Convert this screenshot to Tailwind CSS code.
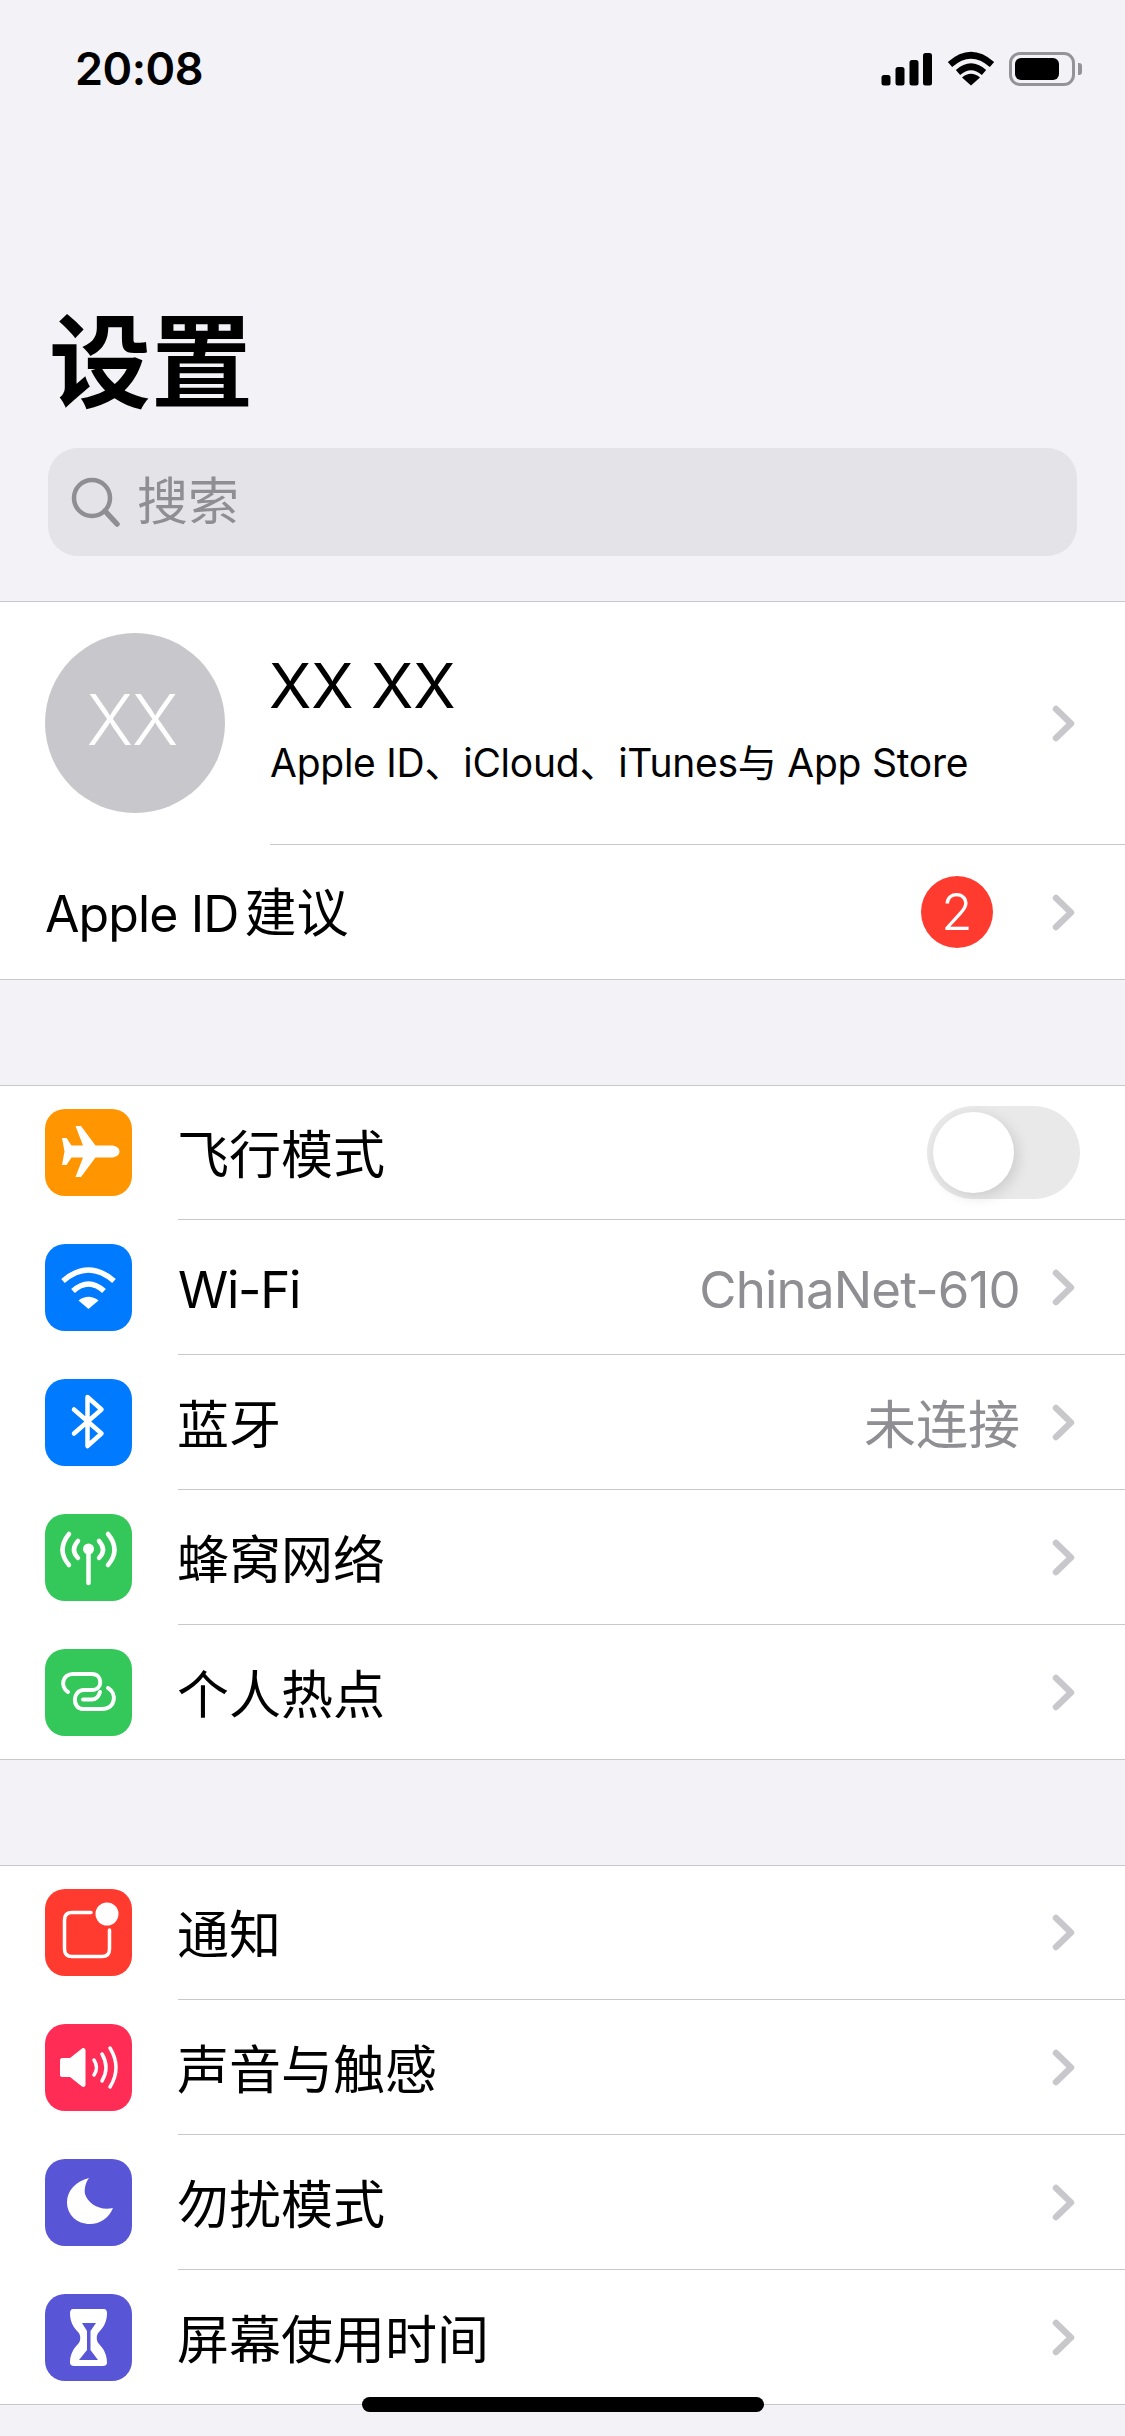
<!DOCTYPE html>
<html lang="zh">
<head>
<meta charset="utf-8">
<script src="https://cdn.jsdelivr.net/npm/@tailwindcss/browser@4"></script>
<title>设置</title>
</head>
<body class="m-0">
<div class="relative w-[1125px] h-[2436px] overflow-hidden bg-[#f2f2f7] text-black [font-family:Inter,'Noto_Sans_CJK_SC',sans-serif]">

  <!-- status bar -->
  <div class="h-[136px] flex items-start justify-between pl-[75px] pr-[43px] pt-[43px]">
    <div class="text-[45px] leading-[52px] font-semibold tracking-[-0.5px]">20:08</div>
    <div class="flex items-center gap-[14px] pt-[8px]">
      <svg class="w-[52px] h-[34px]" viewBox="0 0 52 34" fill="#000"><rect x="0.5" y="23" width="9" height="10.500" rx="2.500"/><rect x="14.500" y="15" width="9" height="18.500" rx="2.500"/><rect x="28.500" y="8" width="9" height="25.500" rx="2.500"/><rect x="42" y="1" width="9" height="32.500" rx="2.500"/></svg>
      <svg class="w-[48px] h-[36px]" viewBox="0 0 48 36" fill="none" stroke="#000" stroke-width="6.500"><path d="M3 13.500Q24 -5 45 13.500"/><path d="M11 21.500Q24 10 37 21.500"/><path d="M24 34.500L15 26.500Q24 19 33 26.500Z" fill="#000" stroke="none"/></svg>
      <div class="flex items-center gap-[3px]">
        <div class="w-[66px] h-[34px] rounded-[11px] border-[3px] border-[#939398] p-[3px]"><div class="w-[44px] h-full rounded-[6px] bg-black"></div></div>
        <div class="w-[4px] h-[12px] rounded-r-[3px] bg-[#939398]"></div>
      </div>
    </div>
  </div>

  <!-- large title -->
  <div class="h-[312px] pl-[49px] pt-[152px] text-[102px] leading-[150px] font-bold">设置</div>
  <div class="mx-[48px] h-[108px] rounded-[30px] bg-[#e3e3e8] flex items-center pl-[23px] gap-[16px] text-[#8e8e93] text-[51px]">
    <svg class="w-[50px] h-[50px]" viewBox="0 0 50 50" fill="none" stroke="#8e8e93" stroke-width="4.500" stroke-linecap="round"><circle cx="21" cy="21" r="18"/><path d="M34 34L46 47" stroke-width="5.500"/></svg>
    <span>搜索</span>
  </div>

  <!-- account section -->
  <section class="mt-[45px] bg-white border-y border-[#c8c7cc]">
    <div class="h-[243px] pl-[45px] flex items-center">
      <div class="w-[180px] h-[180px] mb-[2px] rounded-full bg-[#c7c7cc] flex items-center justify-center text-white text-[70px] font-light tracking-[-1px] pr-[6px] pb-[6px]">XX</div>
      <div class="flex-1 h-full ml-[45px] flex items-center border-b border-[#c8c7cc] pr-[49px]">
        <div class="flex-1 pb-[10px]">
          <div class="text-[62px] leading-[76px] ml-[-1px]">XX XX</div>
          <div class="text-[39px] leading-[52px] mt-[13px] tracking-[-0.25px]">Apple ID、iCloud、iTunes与 App Store</div>
        </div>
        <svg class="w-[25px] h-[41px]" viewBox="0 0 25 41" fill="none" stroke="#c7c7cc" stroke-width="6.500" stroke-linecap="round" stroke-linejoin="round"><path d="M5 6L20 20.500L5 35"/></svg>
      </div>
    </div>
    <div class="h-[134px] pl-[45px] pr-[49px] flex items-center">
      <span class="flex-1 text-[52px] pt-[4px]"><span class="text-[50px] tracking-[-0.9px]">Apple ID</span><span class="ml-[6px]">建议</span></span>
      <div class="w-[72px] h-[72px] rounded-full bg-[#ff3b30] text-white text-[51px] font-light flex items-center justify-center mr-[58px]">2</div>
      <svg class="w-[25px] h-[41px]" viewBox="0 0 25 41" fill="none" stroke="#c7c7cc" stroke-width="6.500" stroke-linecap="round" stroke-linejoin="round"><path d="M5 6L20 20.500L5 35"/></svg>
    </div>
  </section>

  <!-- connectivity section -->
  <section class="mt-[105px] bg-white border-t border-[#c8c7cc]">
    <div class="h-[134px] pl-[45px] flex items-center">
      <svg class="w-[87px] h-[87px] mr-[45px] mb-[1px]" viewBox="0 0 87 87"><rect width="87" height="87" rx="20" fill="#ff9500"/><path d="M66 36.500H50.500L36 17H30.500L38 36.500H26.500L21.500 29H17L19.500 42.500L17 56H21.500L26.500 48.500H38L30.500 68H36L50.500 48.500H66C71 48.500 74.500 46 74.500 42.500C74.500 39 71 36.500 66 36.500Z" fill="#fff"/></svg>
      <div class="flex-1 h-full ml-[1px] flex items-center text-[52px] border-b border-[#c8c7cc] pr-[45px]">
        <span class="flex-1 pt-[7px] ml-[-1px]">飞行模式</span>
        <div class="relative w-[153px] h-[93px] rounded-full bg-[#e9e9ea]">
          <div class="absolute left-[6px] top-[6px] w-[81px] h-[81px] rounded-full bg-white shadow-[4px_4px_14px_rgba(0,0,0,0.12)]"></div>
        </div>
      </div>
    </div>
    <div class="h-[135px] pl-[45px] flex items-center">
      <svg class="w-[87px] h-[87px] mr-[45px]" viewBox="0 0 87 87"><rect width="87" height="87" rx="20" fill="#007aff"/><g fill="none" stroke="#fff" stroke-width="5.500"><path d="M18 37Q43.500 15 69 37"/><path d="M28 47Q43.500 33 59 47"/></g><path d="M43.500 65L33.500 56.500Q43.500 49 53.500 56.500Z" fill="#fff"/></svg>
      <div class="flex-1 h-full ml-[1px] flex items-center text-[51px] border-b border-[#c8c7cc] pr-[49px]">
        <span class="flex-1 pt-[7px] tracking-[-1.3px]">Wi-Fi</span>
        <span class="text-[#8e8e93] mr-[31px] pt-[7px] tracking-[-0.8px]">ChinaNet-610</span>
        <svg class="w-[25px] h-[41px]" viewBox="0 0 25 41" fill="none" stroke="#c7c7cc" stroke-width="6.500" stroke-linecap="round" stroke-linejoin="round"><path d="M5 6L20 20.500L5 35"/></svg>
      </div>
    </div>
    <div class="h-[135px] pl-[45px] flex items-center">
      <svg class="w-[87px] h-[87px] mr-[45px]" viewBox="0 0 87 87"><rect width="87" height="87" rx="20" fill="#007aff"/><path d="M29 30.500L56.500 54.500L42.500 67V18L56.500 30.500L29 54.500" fill="none" stroke="#fff" stroke-width="4.500" stroke-linecap="round" stroke-linejoin="round"/></svg>
      <div class="flex-1 h-full ml-[1px] flex items-center text-[52px] border-b border-[#c8c7cc] pr-[49px]">
        <span class="flex-1 pt-[7px] ml-[-1px]">蓝牙</span>
        <span class="text-[#8e8e93] mr-[31px] pt-[7px]">未连接</span>
        <svg class="w-[25px] h-[41px]" viewBox="0 0 25 41" fill="none" stroke="#c7c7cc" stroke-width="6.500" stroke-linecap="round" stroke-linejoin="round"><path d="M5 6L20 20.500L5 35"/></svg>
      </div>
    </div>
    <div class="h-[135px] pl-[45px] flex items-center">
      <svg class="w-[87px] h-[87px] mr-[45px]" viewBox="0 0 87 87"><rect width="87" height="87" rx="20" fill="#34c759"/><g fill="none" stroke="#fff" stroke-width="4.500" stroke-linecap="round"><path d="M43.500 36V69"/><path d="M24 20Q11 36 24 51"/><path d="M63 20Q76 36 63 51"/><path d="M33 27Q25 36 33 44"/><path d="M54 27Q62 36 54 44"/></g><circle cx="43.500" cy="35" r="5.500" fill="#fff"/></svg>
      <div class="flex-1 h-full ml-[1px] flex items-center text-[52px] border-b border-[#c8c7cc] pr-[49px]">
        <span class="flex-1 pt-[7px] ml-[-1px]">蜂窝网络</span>
        <svg class="w-[25px] h-[41px]" viewBox="0 0 25 41" fill="none" stroke="#c7c7cc" stroke-width="6.500" stroke-linecap="round" stroke-linejoin="round"><path d="M5 6L20 20.500L5 35"/></svg>
      </div>
    </div>
    <div class="h-[134px] pl-[45px] flex items-center">
      <svg class="w-[87px] h-[87px] mr-[45px]" viewBox="0 0 87 87"><rect width="87" height="87" rx="20" fill="#34c759"/><g fill="none" stroke="#fff" stroke-width="4" stroke-linecap="round"><path d="M23 43C15 38 17 25 28 25H47C58 25 58 41 47 41H39C27 41 27 60 38 60H57C71 60 72 44 63 39"/><path d="M38 50.500H47C51 50.500 54 47 55 43"/></g></svg>
      <div class="flex-1 h-full ml-[1px] flex items-center text-[52px] pr-[49px]">
        <span class="flex-1 pt-[7px] ml-[-1px]">个人热点</span>
        <svg class="w-[25px] h-[41px]" viewBox="0 0 25 41" fill="none" stroke="#c7c7cc" stroke-width="6.500" stroke-linecap="round" stroke-linejoin="round"><path d="M5 6L20 20.500L5 35"/></svg>
      </div>
    </div>
  </section>
  <div class="border-t border-[#c8c7cc]"></div>

  <!-- notifications section -->
  <section class="mt-[105px] bg-white border-y border-[#c8c7cc]">
    <div class="h-[134px] pl-[45px] flex items-center">
      <svg class="w-[87px] h-[87px] mr-[45px] mb-[1px]" viewBox="0 0 87 87"><rect width="87" height="87" rx="20" fill="#ff3b30"/><path d="M46 23.500H27C22 23.500 19.500 26 19.500 31V60C19.500 65 22 67.500 27 67.500H57C62 67.500 64.500 65 64.500 60V41" fill="none" stroke="#fff" stroke-width="3.500" stroke-linecap="round"/><circle cx="62" cy="25" r="11.500" fill="#fff"/></svg>
      <div class="flex-1 h-full ml-[1px] flex items-center text-[52px] border-b border-[#c8c7cc] pr-[49px]">
        <span class="flex-1 pt-[7px] ml-[-1px]">通知</span>
        <svg class="w-[25px] h-[41px]" viewBox="0 0 25 41" fill="none" stroke="#c7c7cc" stroke-width="6.500" stroke-linecap="round" stroke-linejoin="round"><path d="M5 6L20 20.500L5 35"/></svg>
      </div>
    </div>
    <div class="h-[135px] pl-[45px] flex items-center">
      <svg class="w-[87px] h-[87px] mr-[45px]" viewBox="0 0 87 87"><rect width="87" height="87" rx="20" fill="#ff2d55"/><path d="M17 34H25L37 24.500C39 23.500 40.500 24.500 40.500 26.500V60.500C40.500 62.500 39 63.500 37 62.500L25 53H17C16 53 15 52 15 51V36C15 35 16 34 17 34Z" fill="#fff"/><g fill="none" stroke="#fff" stroke-width="3.500" stroke-linecap="round"><path d="M49 36Q54 43.500 49 51"/><path d="M57 30Q65 43.500 57 57"/><path d="M65 24Q77 43.500 65 63"/></g></svg>
      <div class="flex-1 h-full ml-[1px] flex items-center text-[52px] border-b border-[#c8c7cc] pr-[49px]">
        <span class="flex-1 pt-[7px] ml-[-1px]">声音与触感</span>
        <svg class="w-[25px] h-[41px]" viewBox="0 0 25 41" fill="none" stroke="#c7c7cc" stroke-width="6.500" stroke-linecap="round" stroke-linejoin="round"><path d="M5 6L20 20.500L5 35"/></svg>
      </div>
    </div>
    <div class="h-[135px] pl-[45px] flex items-center">
      <svg class="w-[87px] h-[87px] mr-[45px]" viewBox="0 0 87 87"><rect width="87" height="87" rx="20" fill="#5856d6"/><path d="M44 19C31 22 22 32 22 43C22 56 32 65 45 65C55 65 64 59 68 49C55 52 43 45 40 35C39 29 41 23 44 19Z" fill="#fff"/></svg>
      <div class="flex-1 h-full ml-[1px] flex items-center text-[52px] border-b border-[#c8c7cc] pr-[49px]">
        <span class="flex-1 pt-[7px] ml-[-1px]">勿扰模式</span>
        <svg class="w-[25px] h-[41px]" viewBox="0 0 25 41" fill="none" stroke="#c7c7cc" stroke-width="6.500" stroke-linecap="round" stroke-linejoin="round"><path d="M5 6L20 20.500L5 35"/></svg>
      </div>
    </div>
    <div class="h-[134px] pl-[45px] flex items-center">
      <svg class="w-[87px] h-[87px] mr-[45px]" viewBox="0 0 87 87"><rect width="87" height="87" rx="20" fill="#5856d6"/><path d="M28 15H59C61 15 62 17 62 19C62 27 59 33 54 38C51 41 51 47 54 50C59 55 62 61 62 69C62 71 60 72 58 72H29C27 72 25 71 25 69C25 61 28 55 33 50C36 47 36 41 33 38C28 33 25 27 25 19C25 17 26 15 28 15Z" fill="#fff"/><path d="M37 29H51L45.500 37V56L53 66H34L42 56V37Z" fill="#5856d6"/></svg>
      <div class="flex-1 h-full ml-[1px] flex items-center text-[52px] pr-[49px]">
        <span class="flex-1 pt-[7px] ml-[-1px]">屏幕使用时间</span>
        <svg class="w-[25px] h-[41px]" viewBox="0 0 25 41" fill="none" stroke="#c7c7cc" stroke-width="6.500" stroke-linecap="round" stroke-linejoin="round"><path d="M5 6L20 20.500L5 35"/></svg>
      </div>
    </div>
  </section>

  <!-- home indicator -->
  <div class="absolute left-[362px] top-[2397px] w-[402px] h-[15px] rounded-full bg-black"></div>
</div>
</body>
</html>
